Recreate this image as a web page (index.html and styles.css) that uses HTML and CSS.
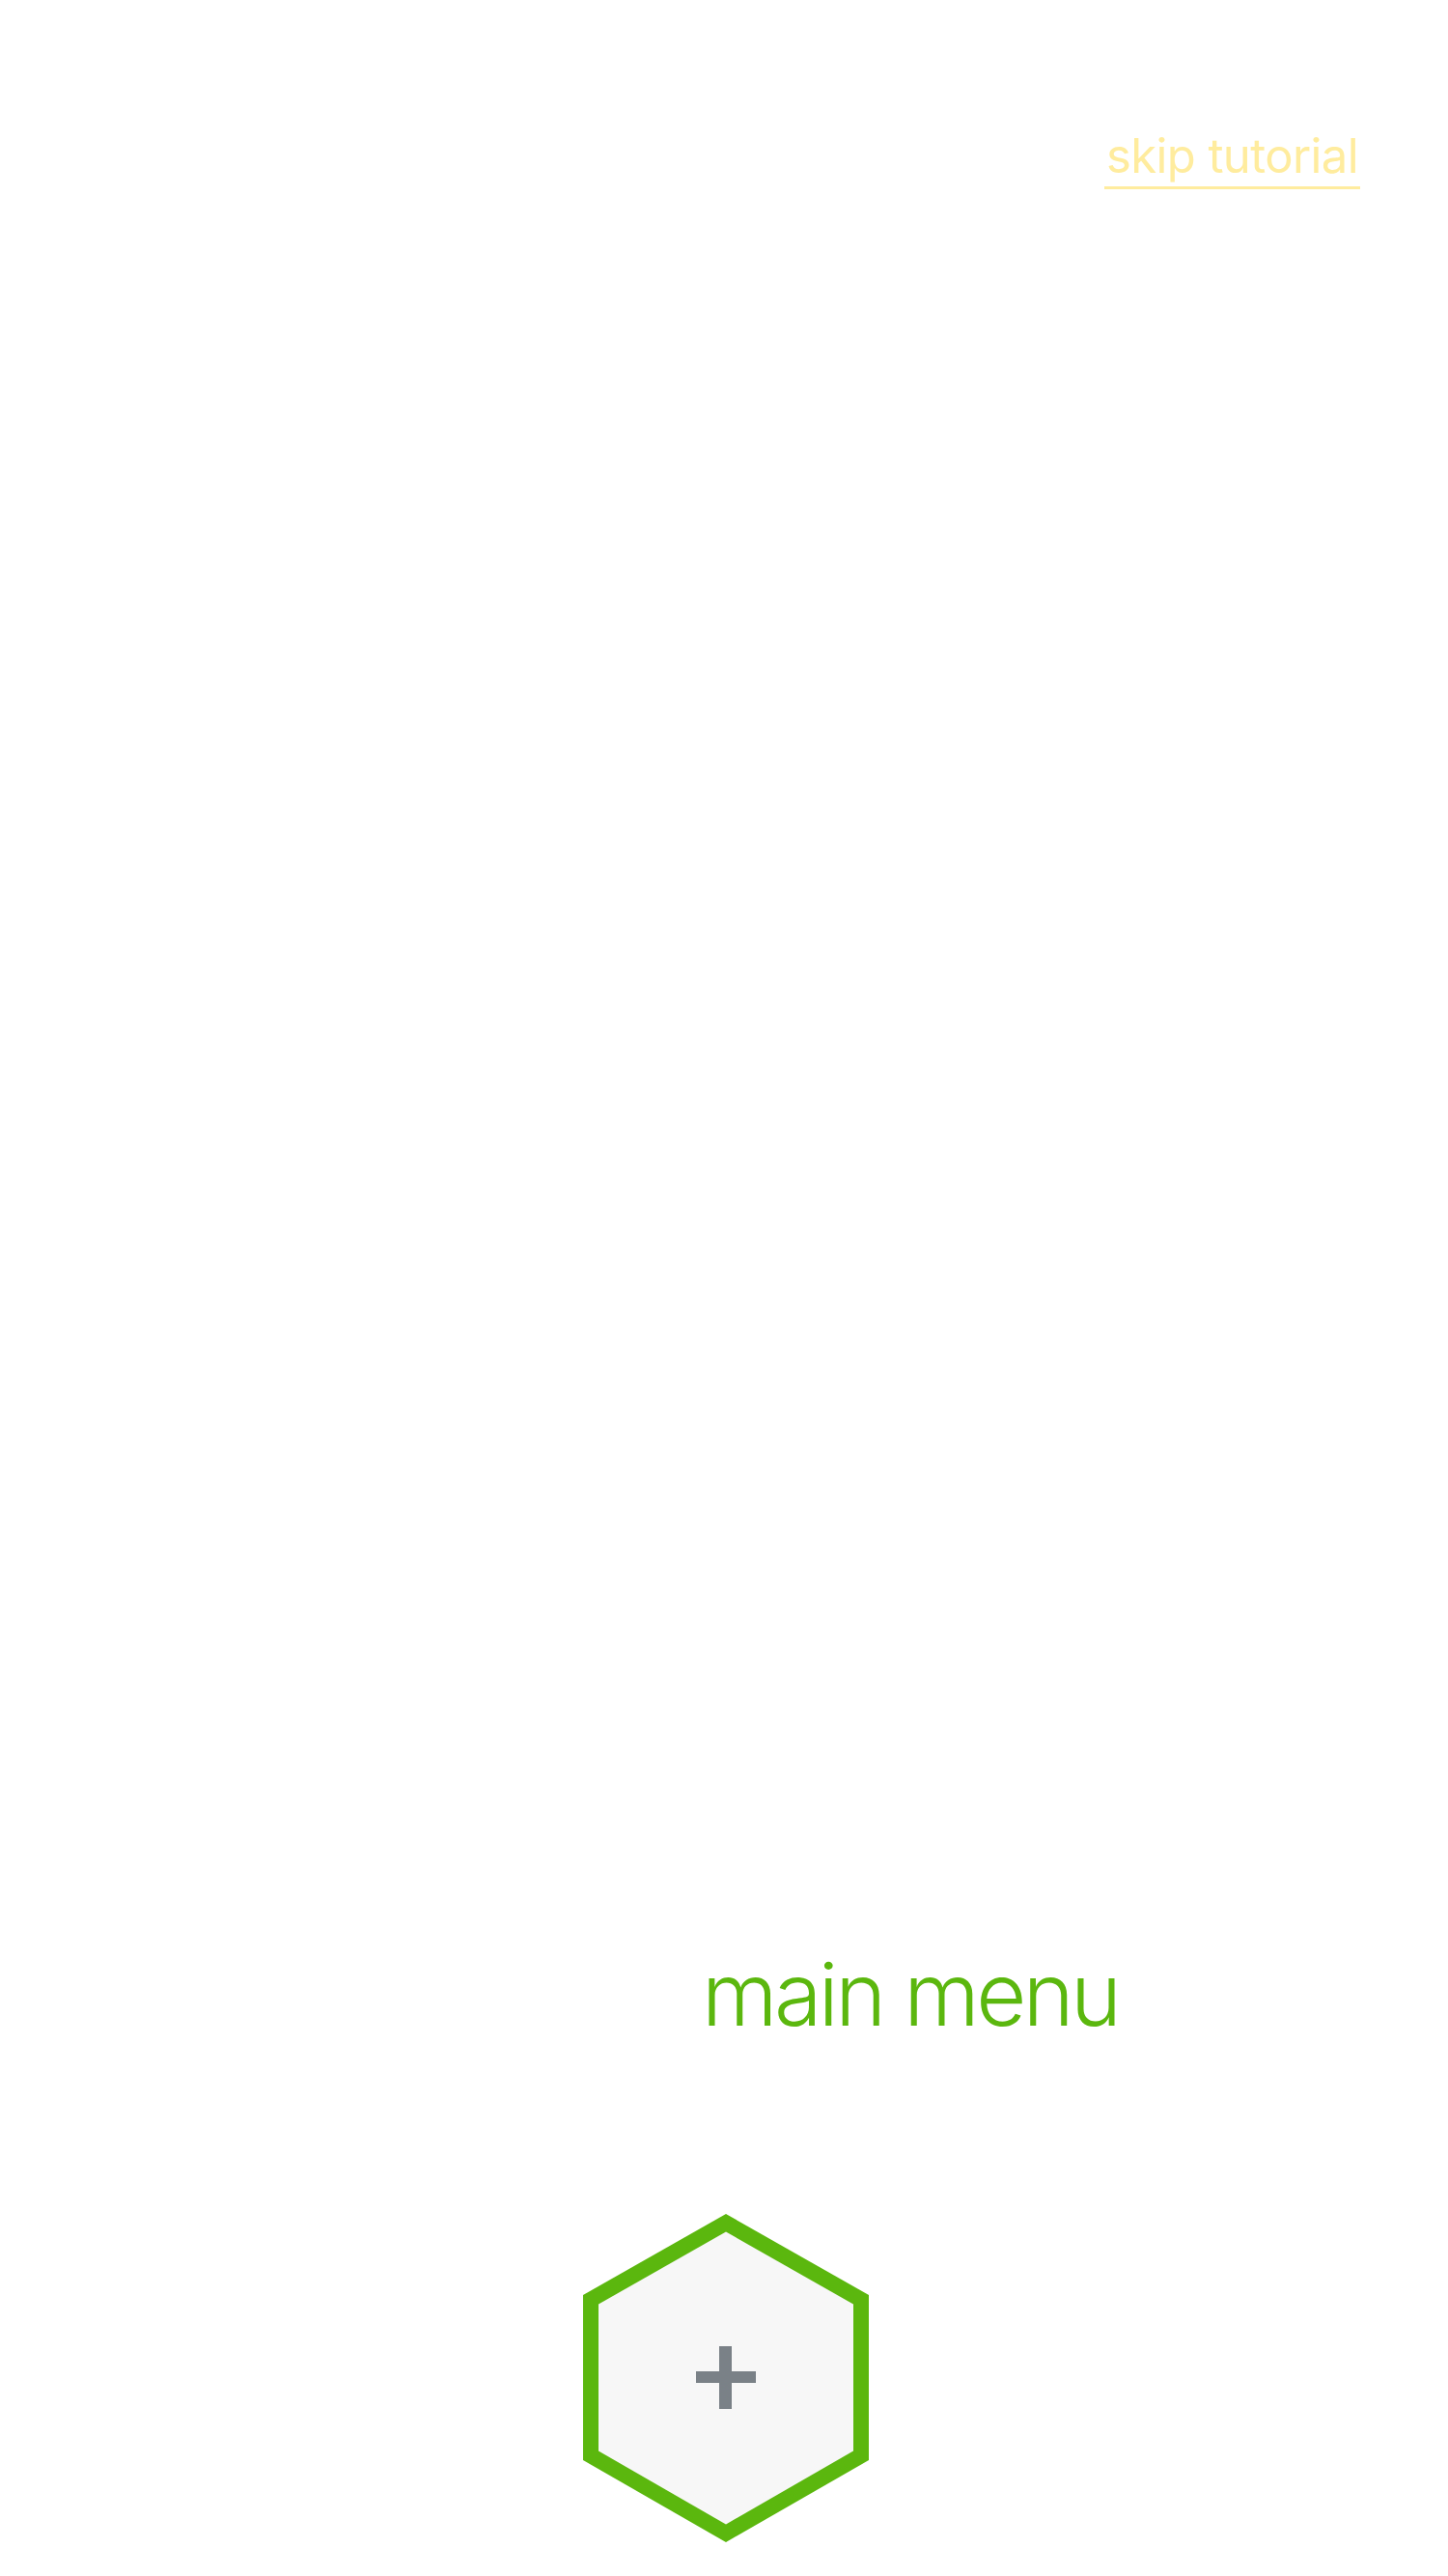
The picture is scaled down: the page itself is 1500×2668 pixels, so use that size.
FILE: index.html
```html
<!DOCTYPE html>
<html lang="en">
<head>
<meta charset="utf-8">
<title>Tutorial</title>
<link rel="stylesheet" href="styles.css">
</head>
<body>
<div class="screen">
  <header class="top">
    <a class="skip" href="#">skip tutorial</a>
  </header>
  <main class="stage">
    <div class="menu-label">main menu</div>
    <div class="hex-wrap">
      <svg class="hex" width="296" height="340" viewBox="0 0 296 340" aria-label="add">
        <polygon points="148,0 296,84 296,255 148,340 0,255 0,84" fill="#5bb70e"/>
        <polygon points="148,18.5 280,93.5 280,245.5 148,321.5 16,245.5 16,93.5" fill="#f7f7f7"/>
        <rect x="117" y="163" width="62" height="12" fill="#7a8187"/>
        <rect x="141" y="137" width="13" height="65" fill="#7a8187"/>
      </svg>
    </div>
  </main>
</div>
</body>
</html>
```

FILE: styles.css
```css
html, body {
  margin: 0;
  padding: 0;
  background: #ffffff;
}

.screen {
  width: 1500px;
  height: 2668px;
  display: flex;
  flex-direction: column;
  font-family: Inter, "Liberation Sans", sans-serif;
}

.top {
  display: flex;
  justify-content: flex-end;
  padding: 137px 91px 0 0;
}

.skip {
  display: inline-block;
  font-size: 49px;
  font-weight: 400;
  line-height: 49px;
  letter-spacing: -0.6px;
  color: #ffec9e;
  text-decoration: none;
  padding: 0 2px 7px 2px;
  border-bottom: 3px solid #ffec9e;
}

.stage {
  flex: 1;
  display: flex;
  flex-direction: column;
}

.menu-label {
  margin-top: 1825px;
  padding-left: 727px;
  font-size: 90px;
  font-weight: 300;
  line-height: 90px;
  letter-spacing: -3.6px;
  color: #5bb70e;
}

.hex-wrap {
  display: flex;
  justify-content: center;
  padding-left: 4px;
  margin-top: 182px;
}

.hex {
  display: block;
}
```
